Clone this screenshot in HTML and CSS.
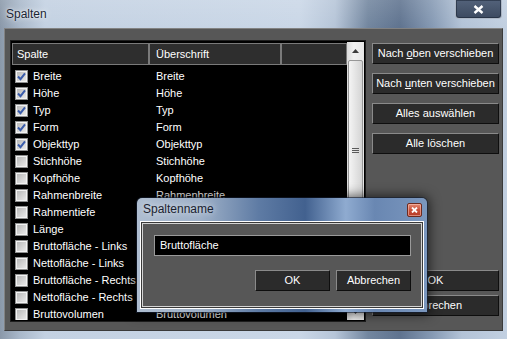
FILE: index.html
```html
<!DOCTYPE html>
<html lang="de">
<head>
  <meta charset="UTF-8">
  <meta name="viewport" content="width=device-width, initial-scale=1.0">
  <title>Spalten</title>
  <link rel="stylesheet" href="styles.css">
</head>
<body>
  <div class="window">
    <div class="titlebar">
      <span class="title">Spalten</span>
      <span class="close">
        <svg width="11" height="9" viewBox="0 0 11 9"><path d="M1.5 1l8 7M9.5 1l-8 7" stroke="#fff" stroke-width="2.4"/></svg>
      </span>
    </div>

    <div class="client">
      <div class="listbox">
        <div class="list-main">
          <div class="list-head">
            <div class="hcell c1">Spalte</div>
            <div class="hcell c2">Überschrift</div>
            <div class="hcell c3"></div>
          </div>
          <ul class="rows">
            <li class="row"><span class="cell1"><span class="cb"><svg viewBox="0 0 11 11"><path d="M2 5.5l2.5 2.7L9 2.3" stroke="#3a5cab" stroke-width="2" fill="none"/></svg></span>Breite</span><span class="cell2">Breite</span></li>
            <li class="row"><span class="cell1"><span class="cb"><svg viewBox="0 0 11 11"><path d="M2 5.5l2.5 2.7L9 2.3" stroke="#3a5cab" stroke-width="2" fill="none"/></svg></span>Höhe</span><span class="cell2">Höhe</span></li>
            <li class="row"><span class="cell1"><span class="cb"><svg viewBox="0 0 11 11"><path d="M2 5.5l2.5 2.7L9 2.3" stroke="#3a5cab" stroke-width="2" fill="none"/></svg></span>Typ</span><span class="cell2">Typ</span></li>
            <li class="row"><span class="cell1"><span class="cb"><svg viewBox="0 0 11 11"><path d="M2 5.5l2.5 2.7L9 2.3" stroke="#3a5cab" stroke-width="2" fill="none"/></svg></span>Form</span><span class="cell2">Form</span></li>
            <li class="row"><span class="cell1"><span class="cb"><svg viewBox="0 0 11 11"><path d="M2 5.5l2.5 2.7L9 2.3" stroke="#3a5cab" stroke-width="2" fill="none"/></svg></span>Objekttyp</span><span class="cell2">Objekttyp</span></li>
            <li class="row"><span class="cell1"><span class="cb"></span>Stichhöhe</span><span class="cell2">Stichhöhe</span></li>
            <li class="row"><span class="cell1"><span class="cb"></span>Kopfhöhe</span><span class="cell2">Kopfhöhe</span></li>
            <li class="row"><span class="cell1"><span class="cb"></span>Rahmenbreite</span><span class="cell2">Rahmenbreite</span></li>
            <li class="row"><span class="cell1"><span class="cb"></span>Rahmentiefe</span><span class="cell2">Rahmentiefe</span></li>
            <li class="row"><span class="cell1"><span class="cb"></span>Länge</span><span class="cell2">Länge</span></li>
            <li class="row"><span class="cell1"><span class="cb"></span>Bruttofläche - Links</span><span class="cell2">Bruttofläche - Links</span></li>
            <li class="row"><span class="cell1"><span class="cb"></span>Nettofläche - Links</span><span class="cell2">Nettofläche - Links</span></li>
            <li class="row"><span class="cell1"><span class="cb"></span>Bruttofläche - Rechts</span><span class="cell2">Bruttofläche - Rechts</span></li>
            <li class="row"><span class="cell1"><span class="cb"></span>Nettofläche - Rechts</span><span class="cell2">Nettofläche - Rechts</span></li>
            <li class="row"><span class="cell1"><span class="cb"></span>Bruttovolumen</span><span class="cell2">Bruttovolumen</span></li>
          </ul>
        </div>
        <div class="scrollbar">
          <div class="sb-btn">
            <svg width="7" height="4" viewBox="0 0 7 4"><path d="M0 4L3.5 0 7 4z" fill="#3c3c3c"/></svg>
          </div>
          <div class="sb-thumb"><span class="grip"></span></div>
          <div class="sb-track"></div>
          <div class="sb-btn">
            <svg width="7" height="4" viewBox="0 0 7 4"><path d="M0 0L3.5 4 7 0z" fill="#3c3c3c"/></svg>
          </div>
        </div>
      </div>

      <div class="side">
        <div class="side-top">
          <button class="btn">Nach <u>o</u>ben verschieben</button>
          <button class="btn">Nach <u>u</u>nten verschieben</button>
          <button class="btn">Alles auswählen</button>
          <button class="btn">Alle löschen</button>
        </div>
        <div class="side-bottom">
          <button class="btn">OK</button>
          <button class="btn">Abbrechen</button>
        </div>
      </div>
    </div>

    <div class="dialog">
      <div class="dlg-title">
        <span class="dlg-caption">Spaltenname</span>
        <span class="dlg-close">
          <svg width="7" height="6" viewBox="0 0 7 6"><path d="M1 .5l5 5M6 .5l-5 5" stroke="#fff" stroke-width="1.8"/></svg>
        </span>
      </div>
      <div class="dlg-body">
        <div class="dlg-inner">
          <div class="dlg-input">Bruttofläche</div>
          <div class="dlg-buttons">
            <button class="btn dlg-btn">OK</button>
            <button class="btn dlg-btn">Abbrechen</button>
          </div>
        </div>
      </div>
    </div>
  </div>
</body>
</html>
```

FILE: styles.css
```css
body {
  margin: 0;
  width: 507px;
  height: 339px;
  overflow: hidden;
  font-family: "Liberation Sans", Arial, sans-serif;
  font-size: 11px;
  background:
    linear-gradient(rgba(255, 255, 255, 0.12), rgba(255, 255, 255, 0) 28px),
    linear-gradient(90deg, #8a98a9 0px, #a9b8ca 20px, #c3d1e2 45px, #cad7e7 300px, #b6c5d8 335px, #72869f 368px, #5f738f 400px, #8599b3 432px, #b3c3d7 462px, #c2d0e1 507px);
}
.window {
  position: relative;
  height: 339px;
}
.titlebar {
  height: 28px;
  display: flex;
  align-items: flex-start;
  padding-left: 6px;
}
.title {
  font-size: 12px;
  line-height: 28px;
  color: #1b2535;
  text-shadow: 0 0 6px rgba(255, 255, 255, 0.9), 0 0 2px rgba(255, 255, 255, 0.8);
}
.close {
  margin-left: auto;
  margin-right: 5px;
  width: 47px;
  height: 19px;
  box-sizing: border-box;
  display: flex;
  align-items: center;
  justify-content: center;
  border: 1px solid rgba(225, 232, 242, 0.65);
  border-top: none;
  border-radius: 0 0 4px 4px;
  background: linear-gradient(#53627a, #3c4a60);
  box-shadow: inset 0 0 0 1px rgba(20, 30, 45, 0.5);
}
.client {
  margin-left: 4px;
  width: 499px;
  height: 303px;
  box-sizing: border-box;
  border: 1px solid;
  border-color: #828282 #3a3a3a #3a3a3a #828282;
  background-color: #575757;
  display: flex;
  gap: 6px;
  padding: 11px 3px 0 5px;
}
.listbox {
  width: 356px;
  height: 282px;
  box-sizing: border-box;
  border: 1px solid #1e1e1e;
  padding: 1px;
  background-color: #000;
  display: flex;
}
.list-main {
  flex: 1;
  overflow: hidden;
}
.list-head {
  display: flex;
  margin-top: 1px;
  height: 22px;
}
.hcell {
  box-sizing: border-box;
  height: 22px;
  line-height: 20px;
  border: 1px solid #7a7a7a;
  background-color: #2e2e2e;
  color: #fff;
  padding-left: 4px;
  white-space: nowrap;
}
.c1 {
  width: 137px;
}
.c2 {
  width: 132px;
  padding-left: 6px;
}
.c3 {
  width: 66px;
}
.rows {
  list-style: none;
  margin: 3px 0 0;
  padding: 0;
}
.row {
  display: flex;
  height: 17px;
  line-height: 17px;
  color: #fff;
  white-space: nowrap;
}
.cell1 {
  width: 137px;
  box-sizing: border-box;
  padding-left: 3px;
  display: flex;
  align-items: center;
  gap: 5px;
  overflow: hidden;
}
.cell2 {
  padding-left: 7px;
}
.cb {
  width: 13px;
  height: 13px;
  box-sizing: border-box;
  flex: none;
  border: 1px solid #8e8f8f;
  background: linear-gradient(135deg, #b4b4b4, #eeeeee);
  box-shadow: inset 0 0 0 1px #f2f2f2;
  display: flex;
}
.cb svg {
  width: 11px;
  height: 11px;
}
.scrollbar {
  width: 17px;
  display: flex;
  flex-direction: column;
  background: linear-gradient(90deg, #dcdcdc, #f1f1f1 40%, #e6e6e6);
}
.sb-btn {
  height: 17px;
  flex: none;
  display: flex;
  align-items: center;
  justify-content: center;
}
.sb-thumb {
  height: 181px;
  margin: 1px 1px 0;
  box-sizing: border-box;
  border: 1px solid #979797;
  border-radius: 2px;
  background: linear-gradient(90deg, #f4f4f4, #e4e4e4 50%, #d4d4d4);
  display: flex;
  align-items: center;
  justify-content: center;
}
.grip {
  width: 7px;
  height: 5px;
  background: repeating-linear-gradient(#5a5a5a 0, #5a5a5a 1px, transparent 1px, transparent 2px);
}
.sb-track {
  flex: 1;
}
.side {
  width: 127px;
  height: 282px;
  box-sizing: border-box;
  padding: 3px 0 6px;
  display: flex;
  flex-direction: column;
  justify-content: space-between;
}
.side-top {
  display: flex;
  flex-direction: column;
  gap: 9px;
}
.side-bottom {
  display: flex;
  flex-direction: column;
  gap: 4px;
}
.btn {
  display: block;
  box-sizing: border-box;
  width: 100%;
  height: 21px;
  margin: 0;
  padding: 0;
  border: 1px solid;
  border-color: #8a8a8a #0e0e0e #0e0e0e #8a8a8a;
  background-color: #2b2b2b;
  color: #fff;
  font-family: "Liberation Sans", Arial, sans-serif;
  font-size: 11px;
  line-height: 19px;
  text-align: center;
  white-space: nowrap;
}
.dialog {
  position: absolute;
  left: 137px;
  top: 198px;
  width: 290px;
  height: 114px;
  box-sizing: border-box;
  padding: 0 3px 3px;
  border-radius: 5px 5px 0 0;
  background: linear-gradient(90deg, #aebdd0 0%, #9fb1c8 22%, #5e7ba4 42%, #42618f 58%, #8fabd0 72%, #6987b2 82%, #7b97be 100%);
  box-shadow: 0 0 0 1px rgba(20, 30, 50, 0.6), 0 0 12px 2px rgba(0, 0, 0, 0.65);
}
.dlg-title {
  height: 23px;
  display: flex;
  align-items: flex-start;
  padding-left: 3px;
}
.dlg-caption {
  font-size: 12px;
  line-height: 23px;
  color: #1a2230;
  text-shadow: 0 0 6px rgba(255, 255, 255, 0.85);
}
.dlg-close {
  margin-left: auto;
  margin-right: 2px;
  margin-top: 5px;
  width: 15px;
  height: 14px;
  box-sizing: border-box;
  border: 1px solid #6e2a1e;
  border-radius: 2px;
  background: linear-gradient(#e48a74, #c9503a 50%, #b43a25);
  box-shadow: inset 0 0 0 1px rgba(255, 210, 200, 0.5);
  display: flex;
  align-items: center;
  justify-content: center;
}
.dlg-body {
  border: 1px solid #fff;
  padding: 1px;
  background-color: #3a3a3a;
}
.dlg-inner {
  border: 1px solid #d4d4d4;
  background-color: #575757;
  padding: 11px 10px 15px 11px;
}
.dlg-input {
  height: 21px;
  box-sizing: border-box;
  border: 1px solid #9a9a9a;
  background-color: #000;
  color: #fff;
  padding-left: 5px;
  line-height: 19px;
}
.dlg-buttons {
  margin-top: 14px;
  display: flex;
  justify-content: flex-end;
  gap: 6px;
}
.dlg-btn {
  width: 75px;
}
```
